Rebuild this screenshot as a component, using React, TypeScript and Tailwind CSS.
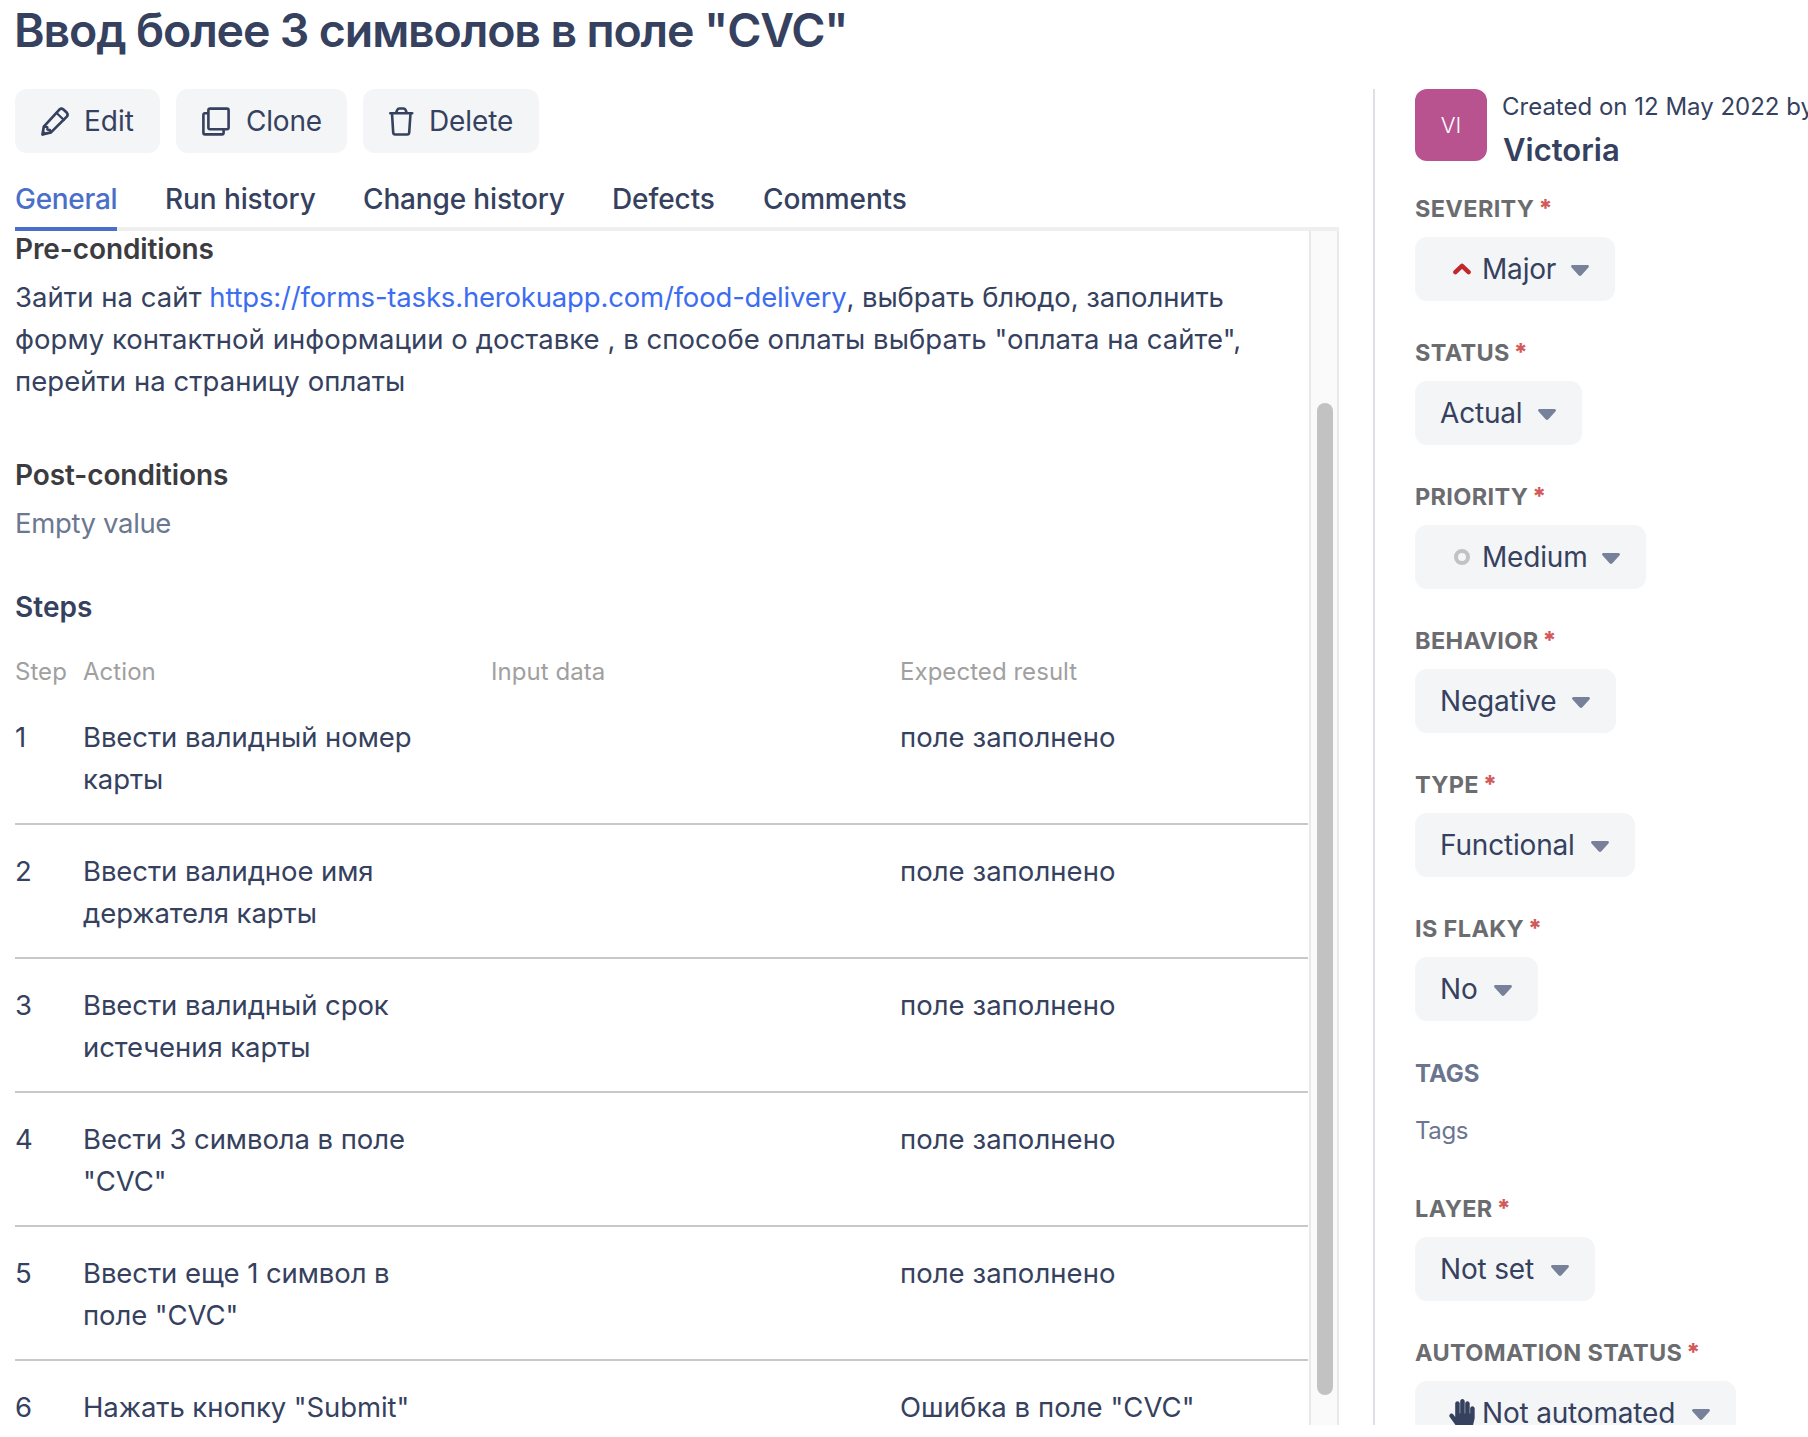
import React from "react";
import { FaHandPaper } from "react-icons/fa";

const PencilIcon = () => (
  <svg width="28" height="29" viewBox="0 0 28 29" fill="none" stroke="currentColor" strokeWidth="2.7" strokeLinejoin="round" strokeLinecap="round">
    <path d="M1.5 27.4 2.8 19.6 18.4 2.6Q20.4.8 22.4 2.5L25.7 5.6Q27.4 7.6 25.8 9.6L10 25.4Z" />
    <path d="M15.6 6 22.9 13M3.2 19.6 6.4 20.2 6.3 22.6 9 23 9.6 25.4" strokeWidth="2.3" />
    <path d="M1.2 27.8 1.9 23.6 5.2 26.8Z" fill="currentColor" strokeWidth="1" />
  </svg>
);

const CloneIcon = () => (
  <svg width="28" height="29" viewBox="0 0 28 29" fill="none" stroke="currentColor" strokeWidth="2.6" strokeLinejoin="round">
    <rect x="6.4" y="1.6" width="20.2" height="20.6" rx="1.6" />
    <path d="M6.2 6.2H2.9Q1.4 6.2 1.4 7.8V25.8Q1.4 27.4 2.9 27.4H20Q21.6 27.4 21.6 25.8V22.4" />
  </svg>
);

const TrashIcon = () => (
  <svg width="25" height="29" viewBox="0 0 25 29" fill="none" stroke="currentColor" strokeWidth="2.6" strokeLinejoin="round" strokeLinecap="round">
    <path d="M1.3 6.2H23.2M7 6 8.2 3Q8.9 1.5 10.4 1.5H14.4Q15.9 1.5 16.6 3L17.8 6" />
    <path d="M3 6.4 4.2 25.6Q4.4 27.5 6.1 27.5H18.3Q20 27.5 20.2 25.6L21.5 6.4" />
  </svg>
);

const Caret = () => (
  <svg width="18" height="11" viewBox="0 0 18 11" fill="#78819a">
    <path d="M1.6 0H16.4C17.9 0 18.4 1.6 17.4 2.6L10.4 10.2Q9 11.6 7.6 10.2L.6 2.6C-.4 1.6 .1 0 1.6 0Z" />
  </svg>
);

const MajorIcon = () => (
  <svg width="18" height="12" viewBox="0 0 18 12" fill="none" stroke="#c1272d" strokeWidth="4.4" strokeLinecap="round" strokeLinejoin="round">
    <path d="M2.4 9.2 9 2.8 15.6 9.2" />
  </svg>
);

const MediumIcon = () => <span className="size-4 rounded-full border-4 border-[#c2c2c2]" />;

const HandIcon = () => <FaHandPaper className="h-[29px] w-[26px] text-[#35415e]" />;

const actions = [
  { label: "Edit", icon: <PencilIcon />, width: "w-[145px]", text: "" },
  { label: "Clone", icon: <CloneIcon />, width: "w-[171px]", text: "pl-px tracking-[-0.2px]" },
  { label: "Delete", icon: <TrashIcon />, width: "w-[176px]", text: "tracking-[-0.1px]" },
];

const tabs = [
  { label: "General", width: "w-[102px]", text: "tracking-[-0.3px]" },
  { label: "Run history", width: "w-[150px]", text: "tracking-[-0.1px]" },
  { label: "Change history", width: "w-[201px]", text: "tracking-[-0.15px]" },
  { label: "Defects", width: "w-[103px]", text: "tracking-[-0.1px]" },
  { label: "Comments", width: "w-[143px]", text: "tracking-[-0.15px]" },
];

const steps = [
  ["Ввести валидный номер карты", "поле заполнено"],
  ["Ввести валидное имя держателя карты", "поле заполнено"],
  ["Ввести валидный срок истечения карты", "поле заполнено"],
  ["Вести 3 символа в поле \"CVC\"", "поле заполнено"],
  ["Ввести еще 1 символ в поле \"CVC\"", "поле заполнено"],
  ["Нажать кнопку \"Submit\"", "Ошибка в поле \"CVC\""],
];

function Label({ children }: { children: string }) {
  return (
    <div className="flex h-[45px] shrink-0 items-start pt-px text-[23.5px] leading-8 font-bold tracking-[0.35px] text-[#6b6c70]">
      {children}
      <span className="ml-1 text-[24px] leading-8 font-extrabold text-[#d25a5a]">*</span>
    </div>
  );
}

function Field({ label, value, width, icon }: { label: string; value: string; width: string; icon?: React.ReactNode }) {
  return (
    <div className="h-36 shrink-0">
      <Label>{label}</Label>
      <button className={`flex h-16 items-center rounded-xl bg-[#f4f5f7] pr-[26px] pl-[25px] text-[28px] whitespace-nowrap text-[#35415e] ${width}`}>
        {icon && <span className="flex w-[42px] shrink-0 items-center justify-center pl-0.5">{icon}</span>}
        <span className="tracking-[-0.18px]">{value}</span>
        <span className="ml-auto pt-0.5">
          <Caret />
        </span>
      </button>
    </div>
  );
}

export default function App() {
  return (
    <div className="h-[1437px] w-[1808px] overflow-hidden bg-white font-['Inter','Noto_Sans',sans-serif] text-[#35415e]">
      <div className="flex h-[1425px] flex-col overflow-hidden">
        <h1 className="h-[89px] shrink-0 pl-[14px] text-[46.5px] leading-[60px] font-semibold tracking-[-1.15px]">
          Ввод более 3 символов в поле "CVC"
        </h1>
        <div className="flex min-h-0 flex-1">
          <main className="ml-[15px] flex w-[1324px] shrink-0 flex-col">
            <div className="flex shrink-0 gap-4">
              {actions.map((a) => (
                <button key={a.label} className={`flex h-16 items-center rounded-xl bg-[#f4f5f7] pl-[26px] text-[28px] ${a.width}`}>
                  {a.icon}
                  <span className={`ml-[15px] ${a.text}`}>{a.label}</span>
                </button>
              ))}
            </div>
            <nav className="mt-[25px] flex h-[53px] shrink-0 gap-12 border-b-4 border-[#efefef]">
              {tabs.map((t, i) => (
                <div
                  key={t.label}
                  className={`h-[53px] text-[28px] leading-[42px] font-medium whitespace-nowrap ${t.width} ${t.text} ${i === 0 ? "border-b-4 border-[#4a6fc9] text-[#4a6fc9]" : ""}`}
                >
                  {t.label}
                </div>
              ))}
            </nav>
            <div className="flex min-h-0 flex-1">
              <section className="w-[1293px] shrink-0 overflow-hidden text-[27.5px] leading-[42px] tracking-[0.05px]">
                <h2 className="text-[28px] leading-9 font-semibold tracking-[-0.1px] text-[#3c3c40]">Pre-conditions</h2>
                <p className="mt-[9px]">
                  Зайти на сайт{" "}
                  <a className="tracking-[-0.18px] text-[#3c6df0]">https://forms-tasks.herokuapp.com/food-delivery</a>
                  <span className="tracking-[-0.1px]">, выбрать блюдо, заполнить</span>
                  <br />
                  форму контактной информации о доставке , в способе оплаты выбрать "оплата на сайте",
                  <br />
                  перейти на страницу оплаты
                </p>
                <h2 className="mt-[55px] text-[28px] leading-9 font-semibold tracking-[-0.1px] text-[#3c3c40]">Post-conditions</h2>
                <p className="mt-[9px] tracking-[-0.35px] text-[#6b7890]">Empty value</p>
                <h2 className="mt-[45px] text-[28px] leading-9 font-semibold">Steps</h2>
                <div className="mt-[29px] mb-px grid grid-cols-[68px_408px_409px_1fr] text-[24px] leading-9 text-[#a0a0a0]">
                  <span>Step</span>
                  <span>Action</span>
                  <span>Input data</span>
                  <span>Expected result</span>
                </div>
                {steps.map(([action, result], i) => (
                  <div key={i} className="grid h-[134px] grid-cols-[68px_408px_409px_1fr] border-b-2 border-[#c8c8c8] pt-[25px]">
                    <span>{i + 1}</span>
                    <span className="pr-[60px] tracking-[-0.08px]">{action}</span>
                    <span />
                    <span>{result}</span>
                  </div>
                ))}
              </section>
              <div className="ml-px flex w-[30px] border-x-2 border-[#e9e9e9] bg-[#fafafa] pt-[172px] pb-[30px] pl-[6px]">
                <div className="w-4 rounded-full bg-[#c2c2c2]" />
              </div>
            </div>
          </main>
          <aside className="ml-[34px] flex flex-1 flex-col overflow-hidden border-l-2 border-[#dfdfe5] pl-10">
            <div className="flex h-[103px] shrink-0">
              <div className="flex size-[72px] shrink-0 items-center justify-center rounded-xl bg-[#b85390] text-[22px] font-light text-white">VI</div>
              <div className="ml-[15px] whitespace-nowrap">
                <div className="text-[24px] leading-9">Created on 12 May 2022 by</div>
                <div className="mt-[5px] pl-px text-[31px] leading-[40px] font-semibold">Victoria</div>
              </div>
            </div>
            <Field label="SEVERITY" value="Major" width="w-[200px]" icon={<MajorIcon />} />
            <Field label="STATUS" value="Actual" width="w-[167px]" />
            <Field label="PRIORITY" value="Medium" width="w-[231px]" icon={<MediumIcon />} />
            <Field label="BEHAVIOR" value="Negative" width="w-[201px]" />
            <Field label="TYPE" value="Functional" width="w-[220px]" />
            <Field label="IS FLAKY" value="No" width="w-[123px]" />
            <div className="h-[136px] shrink-0 pt-[2px] text-[24px] text-[#6b7590]">
              <div className="leading-8 font-bold">TAGS</div>
              <div className="mt-[23px] leading-9 tracking-[-0.4px]">Tags</div>
            </div>
            <Field label="LAYER" value="Not set" width="w-[180px]" />
            <Field label="AUTOMATION STATUS" value="Not automated" width="w-[321px]" icon={<HandIcon />} />
          </aside>
        </div>
      </div>
    </div>
  );
}
